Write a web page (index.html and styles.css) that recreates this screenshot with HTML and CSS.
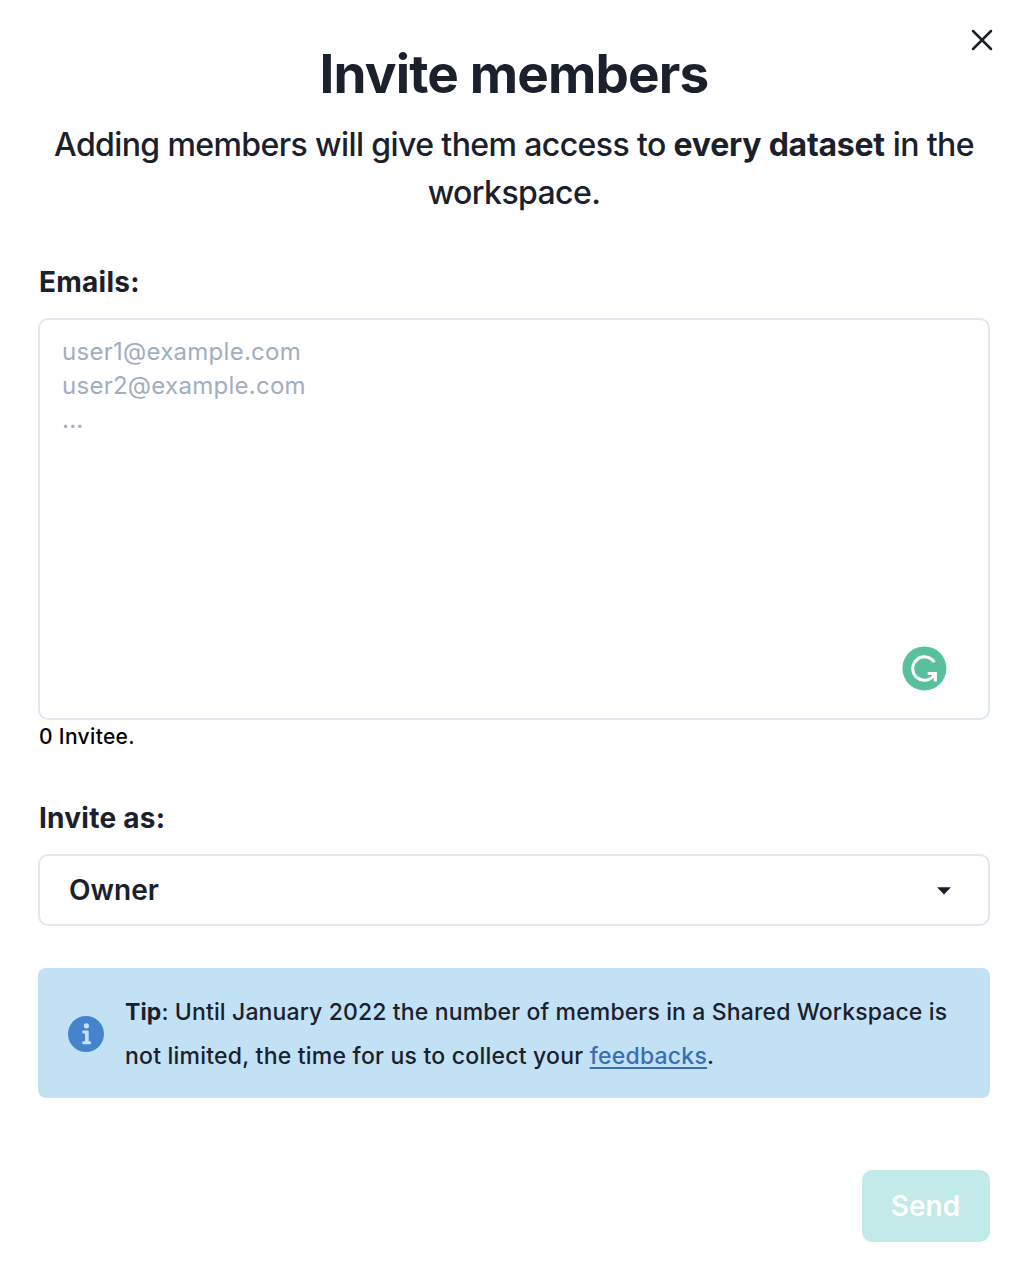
FILE: index.html
```html
<!DOCTYPE html>
<html lang="en">
<head>
<meta charset="utf-8">
<title>Invite members</title>
<link rel="stylesheet" href="styles.css">
</head>
<body>
<main class="dialog">
  <button class="close" aria-label="Close"><svg width="22" height="22" viewBox="0 0 22 22"><path d="M2 2 20 20M20 2 2 20"/></svg></button>
  <header class="heading">
    <h1 class="title">Invite members</h1>
    <p class="intro">Adding members will give them access to <strong>every dataset</strong> in the<br>workspace.</p>
  </header>
  <h2 class="label emails-label">Emails:</h2>
  <div class="emails">
    <div class="placeholder">user1@example.com<br>user2@example.com<br>...</div>
    <svg class="checker" width="45" height="45" viewBox="0 0 45 45"><circle cx="22.4" cy="22.4" r="22" fill="#59c09d"/><path d="M32.3 16.2A11.7 11.7 0 1 0 32.4 28.8M25.7 27.5H33.4V35.5M33 28 30.5 31" fill="none" stroke="#fff" stroke-width="3"/></svg>
  </div>
  <p class="count">0 Invitee.</p>
  <h2 class="label role-label">Invite as:</h2>
  <div class="select"><span class="role">Owner</span><svg class="caret" width="14" height="9" viewBox="0 0 14 9"><path d="M0 1.3h14L7 8.5z" fill="#1a202c"/></svg></div>
  <aside class="tip">
    <svg class="info" width="36" height="38" viewBox="0 0 36 38"><circle cx="18" cy="19" r="18" fill="#4583cd"/><g fill="#c4e1f5"><circle cx="18.4" cy="10.8" r="2.6"/><path d="M15.3 15.6h4.4q1 0 1 1v9.7h1.3q1 0 1 1v1q0 1-1 1h-6.7q-1 0-1-1v-1q0-1 1-1h1.7v-7.7h-1.7q-1 0-1-1v-1q0-1 1-1z"/></g></svg>
    <p class="tip-text"><span class="tip-lead"><strong>Tip</strong>: Until January 2022 the number of members in a Shared Workspace is</span><br>not limited, the time for us to collect your <a class="link" href="#">feedbacks</a>.</p>
  </aside>
  <footer class="actions"><button class="send">Send</button></footer>
</main>
</body>
</html>
```
FILE: styles.css
```css
* { box-sizing: border-box; }
body { margin: 0; background: #fff; color: #1a202c; font-family: Inter, sans-serif; }
h1, h2, p { margin: 0; }
button { border: 0; font-family: inherit; }
.dialog { position: relative; height: 1266px; padding: 38px 38px 24px; }
.close { position: absolute; top: 29px; right: 35px; width: 22px; height: 22px; padding: 0; background: none; }
.close svg { display: block; fill: none; stroke: #1a202c; stroke-width: 2.5; stroke-linecap: round; }
.heading { text-align: center; }
.title { font-size: 53px; line-height: 72px; font-weight: 700; letter-spacing: -.85px; }
.intro { margin-top: 11px; font-size: 32px; line-height: 48px; font-weight: 450; letter-spacing: -.6px; white-space: nowrap; }
.intro strong { font-weight: 700; letter-spacing: -.25px; }
.label { padding-left: 1px; font-size: 28px; line-height: 36px; font-weight: 700; letter-spacing: .25px; }
.emails-label { margin-top: 47px; }
.emails { position: relative; height: 402px; margin-top: 18px; padding: 15px 22px; border: 2px solid #e2e8f0; border-radius: 10px; }
.placeholder { color: #a0aec0; font-size: 24px; line-height: 34px; letter-spacing: .27px; }
.checker { position: absolute; right: 41px; bottom: 27px; }
.count { padding: 1px 0 0 1px; font-size: 21px; line-height: 32px; font-weight: 450; letter-spacing: .35px; color: #000; }
.role-label { margin-top: 47px; }
.select { display: flex; align-items: center; justify-content: space-between; height: 72px; margin-top: 18px; padding: 0 37px 0 29px; border: 2px solid #e2e8f0; border-radius: 10px; }
.role { font-size: 28px; font-weight: 600; }
.tip { display: flex; align-items: center; gap: 21px; height: 130px; margin-top: 42px; padding: 1px 30px 0; border-radius: 8px; background: #c3e1f5; }
.info { flex: none; }
.tip-text { padding-top: 1px; font-size: 23px; line-height: 44px; font-weight: 480; letter-spacing: .22px; white-space: nowrap; }
.tip-lead { letter-spacing: .13px; }
.tip-text strong { font-weight: 700; }
.link { color: #3b6db1; text-decoration-thickness: 2px; text-underline-offset: 3px; }
.actions { display: flex; justify-content: flex-end; margin-top: 72px; }
.send { width: 128px; height: 72px; padding: 0 1px 0 0; border-radius: 10px; background: #c2eae8; color: #fff; font-size: 28px; font-weight: 600; }
```
